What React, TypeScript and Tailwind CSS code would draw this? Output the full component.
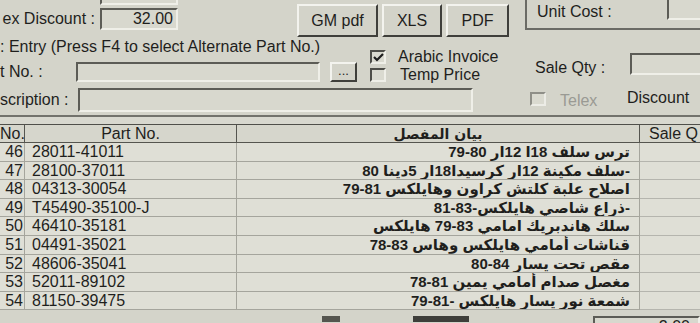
import React from 'react';

const rows = [
  { no: 46, part: '28011-41011', desc: 'ترس سلف 18ا 12ار 80-79' },
  { no: 47, part: '28100-37011', desc: '-سلف مكينة 12ار كرسيدا18ار 5دينا 80' },
  { no: 48, part: '04313-30054', desc: 'اصلاح علبة كلتش كراون وهايلكس 81-79' },
  { no: 49, part: 'T45490-35100-J', desc: '-ذراع شاصي هايلكس-83-81' },
  { no: 50, part: '46410-35181', desc: 'سلك هاندبريك امامي 83-79 هايلكس' },
  { no: 51, part: '04491-35021', desc: 'قناشات أمامي هايلكس وهاس 83-78' },
  { no: 52, part: '48606-35041', desc: 'مقص تحت يسار 84-80' },
  { no: 53, part: '52011-89102', desc: 'مغصل صدام أمامي يمين 81-78' },
  { no: 54, part: '81150-39475', desc: 'شمعة نور يسار هايلكس -81-79' },
];

const sunken =
  'border-2 border-t-[#5c5c56] border-l-[#5c5c56] border-b-[#efefe8] border-r-[#efefe8] bg-[#d8d8ce]';
const raised =
  'border-2 border-t-[#f3f3ee] border-l-[#f3f3ee] border-b-[#3f3f3b] border-r-[#3f3f3b] bg-[#d3d3c9]';

const Check = ({ checked, disabled }: { checked?: boolean; disabled?: boolean }) => (
  <div
    className={`shrink-0 w-[16px] h-[14px] border-2 flex items-center justify-center ${
      disabled
        ? 'border-t-[#8f8f88] border-l-[#8f8f88] border-b-[#ecece6] border-r-[#ecece6]'
        : 'border-t-[#4e4e49] border-l-[#4e4e49] border-b-[#efefe8] border-r-[#efefe8]'
    } bg-[#dadad0]`}
  >
    {checked && (
      <svg width="11" height="9" viewBox="0 0 11 9" aria-hidden="true">
        <path d="M1 4 L4 7 L10 1" stroke="#1e1e1e" strokeWidth="2.2" fill="none" />
      </svg>
    )}
  </div>
);

const App: React.FC = () => {
  return (
    <div className="w-[700px] h-[323px] overflow-hidden bg-[#d4d4ca] text-[#1f1f1d] text-[16px] leading-[18px] font-['Liberation_Sans','DejaVu_Sans',sans-serif]">
      {/* top: discount fields, export buttons, unit cost */}
      <div className="flex h-[38px]">
        <div className="shrink-0 w-[295px] flex flex-col">
          <div className="-mt-[17px] flex items-center h-[22px]">
            <span className="shrink-0 w-[95px] text-right whitespace-nowrap">n Discount :</span>
            <div className={`${sunken} shrink-0 ml-[5px] w-[78px] h-[22px]`} />
          </div>
          <div className="mt-[3px] flex items-center h-[22px]">
            <span className="shrink-0 w-[95px] text-right whitespace-nowrap">ex Discount :</span>
            <div className={`${sunken} shrink-0 ml-[5px] w-[78px] h-[22px] flex items-center justify-end pr-[3px]`}>
              32.00
            </div>
          </div>
        </div>
        <div className="shrink-0 flex gap-[4px] ml-[2px] mt-[4px] h-[33px]">
          <div className={`${raised} w-[81px] flex items-center justify-center`}>GM pdf</div>
          <div className={`${raised} w-[60px] flex items-center justify-center`}>XLS</div>
          <div className={`${raised} w-[63px] flex items-center justify-center`}>PDF</div>
        </div>
        <div className="ml-[16px] flex-1 min-w-0 h-[30px] border-l-2 border-b-2 border-l-[#6b6b65] border-b-[#6b6b65] flex items-start">
          <span className="shrink-0 ml-[10px] mt-[3px] w-[130px] whitespace-nowrap">Unit Cost :</span>
          <div className={`${sunken} shrink-0 -mt-[2px] w-[40px] h-[22px]`} />
        </div>
      </div>

      {/* entry area */}
      <div className="flex h-[77px]">
        <div className="shrink-0 w-[370px] flex flex-col">
          <div className="whitespace-nowrap">: Entry (Press F4 to select Alternate Part No.)</div>
          <div className="mt-[6px] flex items-center h-[20px]">
            <span className="shrink-0 w-[76px] whitespace-nowrap">t No. :</span>
            <div className={`${sunken} shrink-0 w-[244px] h-[20px]`} />
            <div className={`${raised} shrink-0 ml-[10px] w-[27px] h-[20px] flex items-center justify-center text-[13px] leading-none pb-[4px]`}>
              ...
            </div>
          </div>
          <div className="mt-[6px] flex items-center h-[24px]">
            <span className="shrink-0 w-[78px] whitespace-nowrap">scription :</span>
            <div className={`${sunken} shrink-0 w-[395px] h-[24px]`} />
          </div>
        </div>
        <div className="shrink-0 w-[155px] flex flex-col pt-[12px] gap-[4px]">
          <div className="flex items-center h-[14px]">
            <Check checked />
            <span className="ml-[12px] whitespace-nowrap">Arabic Invoice</span>
          </div>
          <div className="flex items-center h-[14px]">
            <Check />
            <span className="ml-[14px] whitespace-nowrap">Temp Price</span>
          </div>
        </div>
        <div className="flex-1 min-w-0 flex flex-col pt-[15px]">
          <div className="flex items-start h-[22px]">
            <span className="shrink-0 ml-[10px] mt-[6px] w-[95px] whitespace-nowrap">Sale Qty :</span>
            <div className={`${sunken} shrink-0 w-[75px] h-[22px]`} />
          </div>
          <div className="mt-[15px] flex items-center h-[16px]">
            <div className="ml-[5px] mt-[1px]">
              <Check disabled />
            </div>
            <span className="shrink-0 ml-[14px] mt-[6px] w-[67px] text-[#9a9a94]">Telex</span>
            <span className="whitespace-nowrap">Discount</span>
          </div>
        </div>
      </div>

      {/* grid */}
      <div className="border-t-2 border-[#72726c] pt-[7px] bg-[#d8d8cf]">
        <div className="flex h-[19px] border-t border-[#4f4f4a] bg-[#d6d6cc]">
          <div className="shrink-0 w-[25px] border-r border-b border-[#55554f] text-right pr-[2px] whitespace-nowrap">No.</div>
          <div className="shrink-0 w-[212px] border-r border-b border-[#55554f] text-center">Part No.</div>
          <div className="shrink-0 w-[403px] border-r border-b border-[#55554f] text-center font-['DejaVu_Sans',sans-serif] text-[14px] font-bold">
            بيان المفصل
          </div>
          <div className="flex-1 min-w-0 border-b border-[#55554f] pl-[9px] whitespace-nowrap overflow-hidden">Sale Q</div>
        </div>
        {rows.map((r) => (
          <div key={r.no} className="flex h-[18.6px] bg-[#dfdfd6]">
            <div className="shrink-0 w-[25px] border-r border-b border-[#a5a59d] text-right pr-[1px]">{r.no}</div>
            <div className="shrink-0 w-[212px] border-r border-b border-[#a5a59d] pl-[7px] whitespace-nowrap">{r.part}</div>
            <div
              dir="rtl"
              className="shrink-0 w-[403px] border-r border-b border-[#a5a59d] pr-[9px] whitespace-nowrap overflow-hidden font-['Liberation_Sans','DejaVu_Sans',sans-serif] text-[15px] font-bold"
            >
              {r.desc}
            </div>
            <div className="flex-1 min-w-0 border-b border-[#b5b5ae]" />
          </div>
        ))}
      </div>

      {/* status strip */}
      <div className="flex items-start h-[14px] pt-[6px]">
        <div className="shrink-0 ml-[322px] w-[18px] h-[6px] bg-[#55554f]" />
        <div className="shrink-0 ml-[73px] w-[56px] h-[6px] bg-[#3e3e3a]" />
        <div className={`${sunken} ml-[124px] flex-1 min-w-0 h-[22px] text-right pr-[8px] leading-[18px]`}>2.00</div>
      </div>
    </div>
  );
};

export default App;
